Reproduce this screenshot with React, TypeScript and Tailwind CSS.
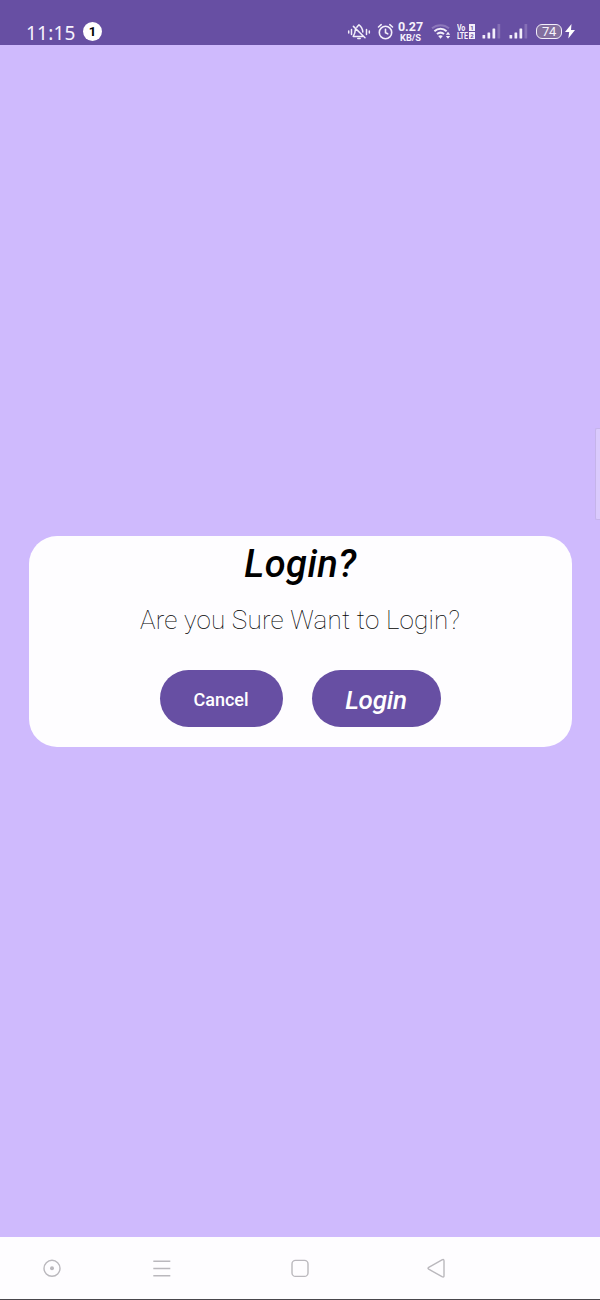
import React from 'react';

function SignalBars() {
  return (
    <svg width="20" height="16" viewBox="0 0 20 16" className="shrink-0" fill="#f3effa">
      <rect x="0.5" y="12" width="2.7" height="3.5" rx="0.5" />
      <rect x="5.5" y="9.5" width="2.7" height="6" rx="0.5" />
      <rect x="10.5" y="5.5" width="2.7" height="10" rx="0.5" />
      <rect x="15.5" y="1" width="2.7" height="14.5" rx="0.5" fill="#8670b6" />
    </svg>
  );
}

function StatusBar() {
  return (
    <header className="flex h-[45px] shrink-0 items-start bg-[#674fa3] pt-[23px] text-[#f6f2fc]">
      <span className="ml-[26px] w-[57px] whitespace-nowrap font-['Noto_Sans',sans-serif] text-[19px] leading-[20px] tracking-[0.2px]">11:15</span>
      <span className="-mt-px flex size-[19px] shrink-0 items-center justify-center rounded-full bg-white text-[13px] font-bold leading-none text-black">1</span>
      <svg width="24" height="18" viewBox="0 0 24 18" className="ml-[245px] shrink-0" fill="none" stroke="#f3effa" strokeWidth="1.5" strokeLinecap="round" strokeLinejoin="round">
        <path d="M1.7 8v2M4.5 6.5v5M22.3 8v2M19.5 6.5v5" />
        <path d="M9.8 4.2Q10.8 3 12 1.8Q15.4 4 15.8 9M8.4 6.4Q8.2 10.4 6.2 13.4H15.4M10.8 15.6h2.4M6.4 3.4l11.6 11.4" />
      </svg>
      <svg width="17" height="18" viewBox="0 0 17 18" className="ml-[6px] shrink-0" fill="none" stroke="#f3effa" strokeWidth="1.6" strokeLinecap="round">
        <circle cx="8.5" cy="9.5" r="6.2" />
        <path d="M8.5 6.2v3.6l2.2 1M1.5 4l2.7-2.3M15.5 4l-2.7-2.3" />
      </svg>
      <span className="-mt-[3px] ml-[3px] flex w-[27px] shrink-0 flex-col items-center font-bold">
        <span className="text-[12.5px] leading-[13px]">0.27</span>
        <span className="text-[9.3px] leading-[9px]">KB/S</span>
      </span>
      <svg width="21" height="18" viewBox="0 0 21 18" className="ml-[7px] shrink-0" fill="none" stroke="#f3effa" strokeWidth="2">
        <path d="M1 5.3c5-4.2 12-4.2 17 0" stroke="#8d78bb" />
        <path d="M3.4 8.2c3.6-3.2 8.6-3.2 12.2 0M6 11.1c2.2-1.9 4.8-1.9 7 0" />
        <path d="M7.2 13.1q2.3-1.8 4.6 0l-2.3 2.7z" fill="#f3effa" stroke="none" />
        <path d="M14.8 11.7l2.2-2.9 2.2 2.9zM14.8 12.9l2.2 2.9 2.2-2.9z" fill="#f3effa" stroke="none" />
      </svg>
      <span className="ml-[5px] mt-px flex w-[18px] shrink-0 items-start justify-between">
        <span className="flex w-[11px] origin-left scale-x-[.75] flex-col text-[9.5px] font-bold leading-[8px] tracking-[-0.3px]">
          <span>Vo</span>
          <span>LTE</span>
        </span>
        <span className="flex w-[6px] flex-col gap-px text-center text-[6px] font-bold leading-[7px] text-[#674fa3]">
          <span className="h-[7px] bg-[#f3effa]">1</span>
          <span className="h-[7px] bg-[#f3effa]">2</span>
        </span>
      </span>
      <span className="ml-[7px] flex"><SignalBars /></span>
      <span className="ml-[7px] flex"><SignalBars /></span>
      <span className="ml-[7px] mt-px flex h-[15px] w-[26px] shrink-0 items-center justify-center rounded-[6px] border-[1.5px] border-[#f3effa] bg-[#836f9f] text-[13px] leading-none tracking-[-0.3px]">74</span>
      <svg width="13" height="16" viewBox="0 0 13 16" className="ml-[2px] shrink-0" fill="#ffffff">
        <path d="M7.5 1L1 9h4.2L4.3 15.5 11 7H7z" />
      </svg>
    </header>
  );
}

function ConfirmCard() {
  return (
    <section className="flex h-[211px] flex-col items-center rounded-[28px] bg-[#fefdff]">
      <h1 className="mt-[5px] whitespace-nowrap pl-px text-[38px] font-medium italic leading-[47px] tracking-[0.5px] text-black">Login?</h1>
      <p className="mt-[15px] whitespace-nowrap text-[26px] font-thin leading-[34px] tracking-[0.2px] text-black">Are you Sure Want to Login?</p>
      <div className="mt-[33px] flex gap-[29px]">
        <button className="h-[57px] w-[123px] rounded-full bg-[#674fa3] pt-[2px] text-[18px] font-medium text-white">Cancel</button>
        <button className="h-[57px] w-[129px] rounded-full bg-[#674fa3] pt-[3px] text-[26px] font-medium italic leading-none tracking-[-0.2px] text-white">Login</button>
      </div>
    </section>
  );
}

function NavigationBar() {
  return (
    <nav className="flex h-[63px] shrink-0 items-center border-b border-[#49474c] bg-[#fefdff] pl-[42px]">
      <svg width="20" height="20" viewBox="0 0 20 20" fill="none" stroke="#bab8bd" strokeWidth="1.4">
        <circle cx="10" cy="10.3" r="8" />
        <circle cx="10" cy="10.3" r="2" fill="#bab8bd" stroke="none" />
      </svg>
      <svg width="20" height="20" viewBox="0 0 20 20" className="ml-[90px]" fill="none" stroke="#bab8bd" strokeWidth="1.4">
        <path d="M1.3 3.3h17M1.3 10.5h17M1.3 17.7h17" />
      </svg>
      <svg width="20" height="20" viewBox="0 0 20 20" className="ml-[118px]" fill="none" stroke="#bab8bd" strokeWidth="1.4">
        <rect x="2" y="2.4" width="16" height="16" rx="3.5" />
      </svg>
      <svg width="20" height="20" viewBox="0 0 20 20" className="ml-[116px]" fill="none" stroke="#bab8bd" strokeWidth="1.4" strokeLinejoin="round">
        <path d="M2.7 9.4L16 1.9q2-1 2 1v14.8q0 2-2 1L2.7 11.2q-1.4-.9 0-1.8z" />
      </svg>
    </nav>
  );
}

export default function App() {
  return (
    <div className="flex h-[1300px] w-[600px] flex-col overflow-hidden bg-[#cfbafd] font-[Roboto,sans-serif]">
      <StatusBar />
      <main className="relative flex-1 px-[28.5px] pt-[490.5px]">
        <ConfirmCard />
        <div className="absolute right-0 top-[383px] h-[92px] w-[5px] rounded-l-[2px] border border-r-0 border-[#c5b4ea] bg-[#dacafd]" />
      </main>
      <NavigationBar />
    </div>
  );
}
